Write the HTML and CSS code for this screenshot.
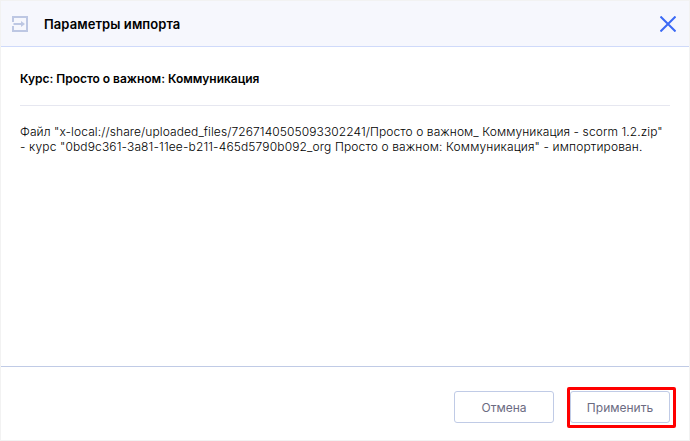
FILE: index.html
```html
<!DOCTYPE html>
<html lang="ru">

<head>
    <meta charset="UTF-8">
    <title>Параметры импорта</title>
    <link rel="stylesheet" href="styles.css">
</head>

<body>
    <div class="dialog">
        <div class="header">
            <svg class="icon" width="16" height="16" viewBox="0 0 16 16">
                <path d="M1 6V1h14v14H1v-5M1.5 8h9" />
                <path class="head" d="M9 5l4 3-4 3z" />
            </svg>
            <h1>Параметры импорта</h1>
            <svg class="close" width="16" height="16" viewBox="0 0 16 16">
                <path d="M.5.5l15 15M15.5.5l-15 15" />
            </svg>
        </div>
        <div class="content">
            <h2>Курс: Просто о важном: Коммуникация</h2>
            <p><span class="file">Файл "x-local://share/uploaded_files/7267140505093302241/Просто о важном_ Коммуникация - scorm 1.2.zip"</span><br>- курс "0bd9c361-3a81-11ee-b211-465d5790b092_org Просто о важном: Коммуникация" - импортирован.</p>
        </div>
        <div class="footer">
            <button>Отмена</button>
            <div class="mark"><button>Применить</button></div>
        </div>
    </div>
</body>

</html>
```
FILE: styles.css
```css
* {
    box-sizing: border-box;
}
body {
    margin: 0;
    font-family: Inter, sans-serif;
    color: #000;
}
.dialog {
    display: flex;
    flex-direction: column;
    height: 441px;
    border: 1px solid #f2f2f2;
    background: #fff;
}
.header {
    display: flex;
    align-items: center;
    height: 46px;
    padding: 0 13px 0 11px;
    background: #f6f7fd;
    border-bottom: 1px solid #cfdafa;
}
.header svg {
    fill: none;
}
.icon {
    stroke: #bdc7e3;
    stroke-width: 2;
}
.icon .head {
    fill: #bdc7e3;
    stroke: none;
}
.close {
    stroke: #3b69f5;
    stroke-width: 2;
}
h1 {
    flex: 1;
    margin: 0 0 0 16px;
    font-size: 13px;
    font-weight: 600;
    letter-spacing: 0.08px;
}
.content {
    flex: 1;
    padding: 0 19px;
}
h2 {
    margin: 0;
    height: 59px;
    padding-top: 24px;
    font-size: 12px;
    line-height: 16px;
    font-weight: 600;
    letter-spacing: -0.02px;
    border-bottom: 1px solid #e6e7f0;
}
p {
    margin: 18px 0 0;
    font-size: 12px;
    line-height: 15px;
    font-weight: 300;
    letter-spacing: 0.14px;
    white-space: nowrap;
}
.file {
    letter-spacing: 0.09px;
}
.footer {
    display: flex;
    justify-content: flex-end;
    height: 74px;
    padding: 20px 13px 0 0;
    border-top: 1px solid #c0cbe6;
}
button {
    width: 100px;
    height: 32px;
    margin: 4px 13px 0 0;
    padding: 0;
    font: 12px Inter, sans-serif;
    color: #6b6b82;
    background: #fff;
    border: 1px solid #c0cbe6;
    border-radius: 3px;
}
.mark {
    width: 109px;
    height: 41px;
    border: 3px solid #f00;
    border-radius: 2px;
}
.mark button {
    margin: 1px 0 0;
}
```
